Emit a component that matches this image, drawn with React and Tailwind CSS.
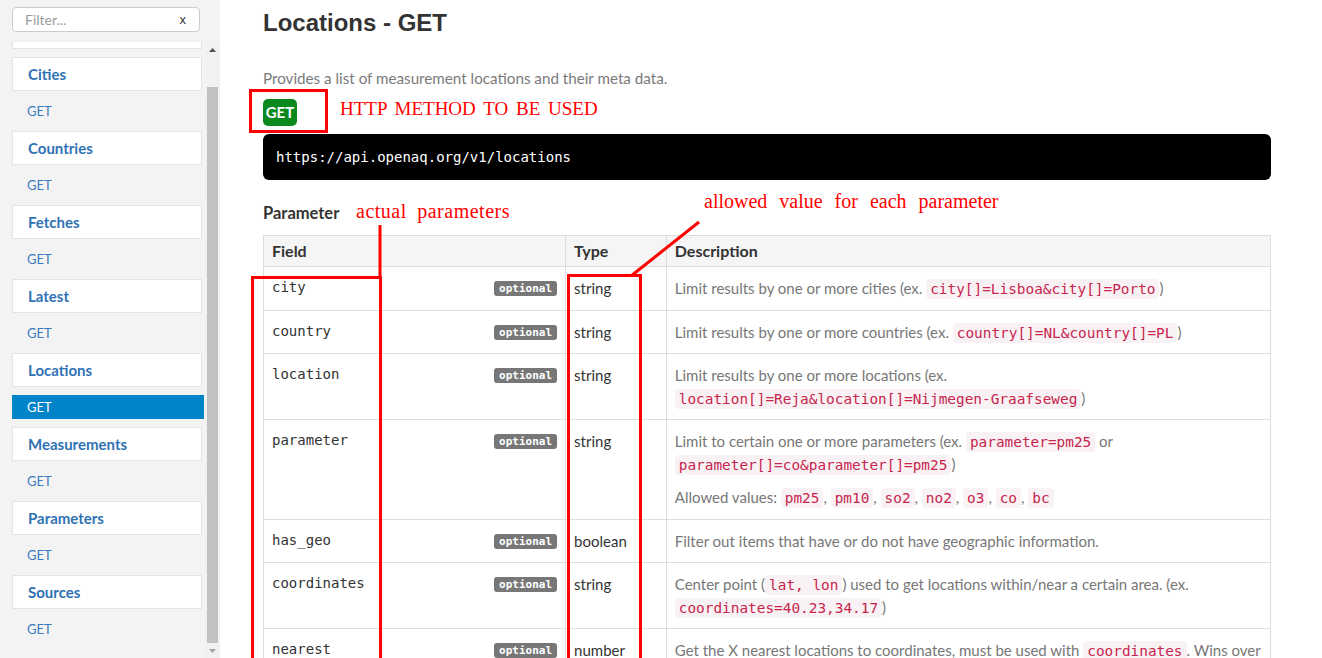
import React from "react";

const navItems = [
  "Cities",
  "Countries",
  "Fetches",
  "Latest",
  "Locations",
  "Measurements",
  "Parameters",
  "Sources",
];

function Code({ children }) {
  return (
    <code className="rounded-[4px] bg-[#f9f2f4] px-[4px] py-[2px] font-['DejaVu_Sans_Mono',monospace] text-[14.4px] leading-none text-[#c7254e]">
      {children}
    </code>
  );
}

function Optional() {
  return (
    <span className="mt-[4px] inline-block h-[15px] shrink-0 rounded-[3px] bg-[#777777] px-[5px] font-['DejaVu_Sans_Mono',monospace] text-[11px] font-bold leading-[15px] text-white">
      optional
    </span>
  );
}

const rows = [
  {
    field: "city",
    type: "string",
    desc: (
      <p>
        Limit results by one or more cities (ex. <Code>city[]=Lisboa&amp;city[]=Porto</Code>)
      </p>
    ),
  },
  {
    field: "country",
    type: "string",
    desc: (
      <p>
        Limit results by one or more countries (ex. <Code>country[]=NL&amp;country[]=PL</Code>)
      </p>
    ),
  },
  {
    field: "location",
    type: "string",
    desc: (
      <p>
        Limit results by one or more locations (ex.{" "}
        <Code>location[]=Reja&amp;location[]=Nijmegen-Graafseweg</Code>)
      </p>
    ),
  },
  {
    field: "parameter",
    type: "string",
    desc: (
      <>
        <p className="mb-[11px]">
          Limit to certain one or more parameters (ex. <Code>parameter=pm25</Code> or{" "}
          <Code>parameter[]=co&amp;parameter[]=pm25</Code>)
        </p>
        <p>
          Allowed values: <Code>pm25</Code>, <Code>pm10</Code>, <Code>so2</Code>,{" "}
          <Code>no2</Code>, <Code>o3</Code>, <Code>co</Code>, <Code>bc</Code>
        </p>
      </>
    ),
  },
  {
    field: "has_geo",
    type: "boolean",
    desc: <p>Filter out items that have or do not have geographic information.</p>,
  },
  {
    field: "coordinates",
    type: "string",
    desc: (
      <p>
        Center point (<Code>lat, lon</Code>) used to get locations within/near a certain area. (ex.{" "}
        <Code>coordinates=40.23,34.17</Code>)
      </p>
    ),
  },
  {
    field: "nearest",
    type: "number",
    desc: (
      <p>
        Get the X nearest locations to coordinates, must be used with <Code>coordinates</Code>. Wins over{" "}
        <Code>radius</Code> if both are present. Will add a <Code>distance</Code> property to locations.
      </p>
    ),
  },
];

export default function App() {
  return (
    <div className="relative flex h-screen w-full overflow-hidden bg-white font-['Lato',sans-serif]">
      {/* Sidebar */}
      <aside className="flex h-full w-[220px] shrink-0 flex-col bg-[#f3f3f3]">
        <div className="h-[42px] shrink-0 px-[12px] pt-[7px]">
          <div className="flex h-[25px] w-[188px] items-center justify-between rounded-[4px] border border-[#cccccc] bg-white pl-[12px] pr-[13px] text-[14px]">
            <span className="text-[#9a9a9a]">Filter...</span>
            <span className="font-['Liberation_Sans',sans-serif] text-[13px] text-[#333333]">x</span>
          </div>
        </div>
        <div className="flex min-h-0 flex-1">
          <nav className="min-w-0 flex-1 overflow-hidden pl-[12px]">
            <div className="h-[7px] w-[190px] border-x border-b border-[#e3e3e3] bg-white" />
            {navItems.map((name) => {
              const active = name === "Locations";
              return (
                <div key={name}>
                  <div className="mt-[8px] flex h-[34px] w-[190px] items-center border border-[#e3e3e3] bg-white pl-[15px] text-[15px] font-bold text-[#2f72b4]">
                    {name}
                  </div>
                  <div
                    className={
                      active
                        ? "my-[8px] flex h-[24px] w-[192px] items-center bg-[#0084c9] pl-[15px] pt-[1px] text-[13px] text-white"
                        : "my-[8px] flex h-[24px] w-[192px] items-center pl-[15px] pt-[1px] text-[13px] text-[#3b7cbf]"
                    }
                  >
                    GET
                  </div>
                </div>
              );
            })}
          </nav>
          <div className="flex w-[15px] shrink-0 flex-col bg-[#f1f1f1]">
            <div className="flex h-[15px] shrink-0 items-center justify-center">
              <svg width="7" height="4" viewBox="0 0 7 4">
                <path d="M0 4 L3.5 0 L7 4 Z" fill="#505050" />
              </svg>
            </div>
            <div className="h-[30px] shrink-0" />
            <div className="mx-[2px] h-[556px] shrink-0 bg-[#c1c1c1]" />
            <div className="flex h-[15px] shrink-0 items-center justify-center">
              <svg width="7" height="4" viewBox="0 0 7 4">
                <path d="M0 0 L3.5 4 L7 0 Z" fill="#a3a3a3" />
              </svg>
            </div>
          </div>
        </div>
      </aside>

      {/* Main */}
      <main className="min-w-0 flex-1 pl-[43px] pr-[51px] pt-[8px]">
        <h1 className="font-['Liberation_Sans',sans-serif] text-[24px] font-bold leading-[30px] text-[#333333]">
          Locations - GET
        </h1>
        <p className="mt-[29px] text-[15.2px] leading-[22px] text-[#7a7a7a]">
          Provides a list of measurement locations and their meta data.
        </p>
        <div className="mt-[10px] flex h-[27px] w-[34px] items-center justify-center rounded-[5px] bg-[#0a8a1e] text-[15px] font-bold text-white">
          GET
        </div>
        <div className="mt-[8px] flex h-[46px] items-center rounded-[6px] bg-black pl-[13px] font-['DejaVu_Sans_Mono',monospace] text-[14px] text-white">
          https://api.openaq.org/v1/locations
        </div>
        <h2 className="mt-[22px] text-[16.5px] font-bold leading-[22px] text-[#333333]">Parameter</h2>
        <table className="mt-[11px] w-full table-fixed border-collapse text-[15px]">
          <colgroup>
            <col className="w-[30%]" />
            <col className="w-[10%]" />
            <col className="w-[60%]" />
          </colgroup>
          <thead>
            <tr className="bg-[#f5f5f5]">
              <th className="border border-[#dddddd] px-[8px] py-[4px] text-left text-[16px] font-bold leading-[22px] text-[#333333]">
                Field
              </th>
              <th className="border border-[#dddddd] px-[8px] py-[4px] text-left text-[16px] font-bold leading-[22px] text-[#333333]">
                Type
              </th>
              <th className="border border-[#dddddd] px-[8px] py-[4px] text-left text-[16px] font-bold leading-[22px] text-[#333333]">
                Description
              </th>
            </tr>
          </thead>
          <tbody>
            {rows.map((r) => (
              <tr key={r.field}>
                <td className="border border-[#dddddd] px-[8px] py-[10px] align-top">
                  <div className="flex items-start justify-between">
                    <span className="font-['DejaVu_Sans_Mono',monospace] text-[14px] leading-[21px] text-[#333333]">
                      {r.field}
                    </span>
                    <Optional />
                  </div>
                </td>
                <td className="border border-[#dddddd] px-[8px] py-[10px] align-top leading-[22.5px] text-[#333333]">
                  {r.type}
                </td>
                <td className="border border-[#dddddd] px-[8px] py-[10px] align-top leading-[22.5px] text-[#777777]">
                  {r.desc}
                </td>
              </tr>
            ))}
          </tbody>
        </table>
      </main>

      {/* Annotations overlay */}
      <svg
        className="pointer-events-none absolute left-0 top-0"
        width="1322"
        height="658"
        viewBox="0 0 1322 658"
      >
        <g fill="none" stroke="#ff0000" strokeWidth="3">
          <rect x="250.5" y="90.5" width="76" height="41" />
          <rect x="252.5" y="277.5" width="128" height="500" />
          <line x1="380" y1="225" x2="380" y2="278" />
          <rect x="568.5" y="275.5" width="72" height="500" />
          <line x1="631" y1="276" x2="699" y2="222" />
        </g>
      </svg>
      <span className="pointer-events-none absolute left-[340px] top-[97px] font-['Liberation_Serif',serif] text-[19px] leading-[24px] text-[#ff0000] [word-spacing:3px]">
        HTTP METHOD TO BE USED
      </span>
      <span className="pointer-events-none absolute left-[356px] top-[199px] font-['Liberation_Serif',serif] text-[20px] leading-[24px] tracking-[0.5px] text-[#ff0000] [word-spacing:5px]">
        actual parameters
      </span>
      <span className="pointer-events-none absolute left-[704px] top-[189px] font-['Liberation_Serif',serif] text-[20px] leading-[24px] text-[#ff0000] [word-spacing:7px]">
        allowed value for each parameter
      </span>
    </div>
  );
}
